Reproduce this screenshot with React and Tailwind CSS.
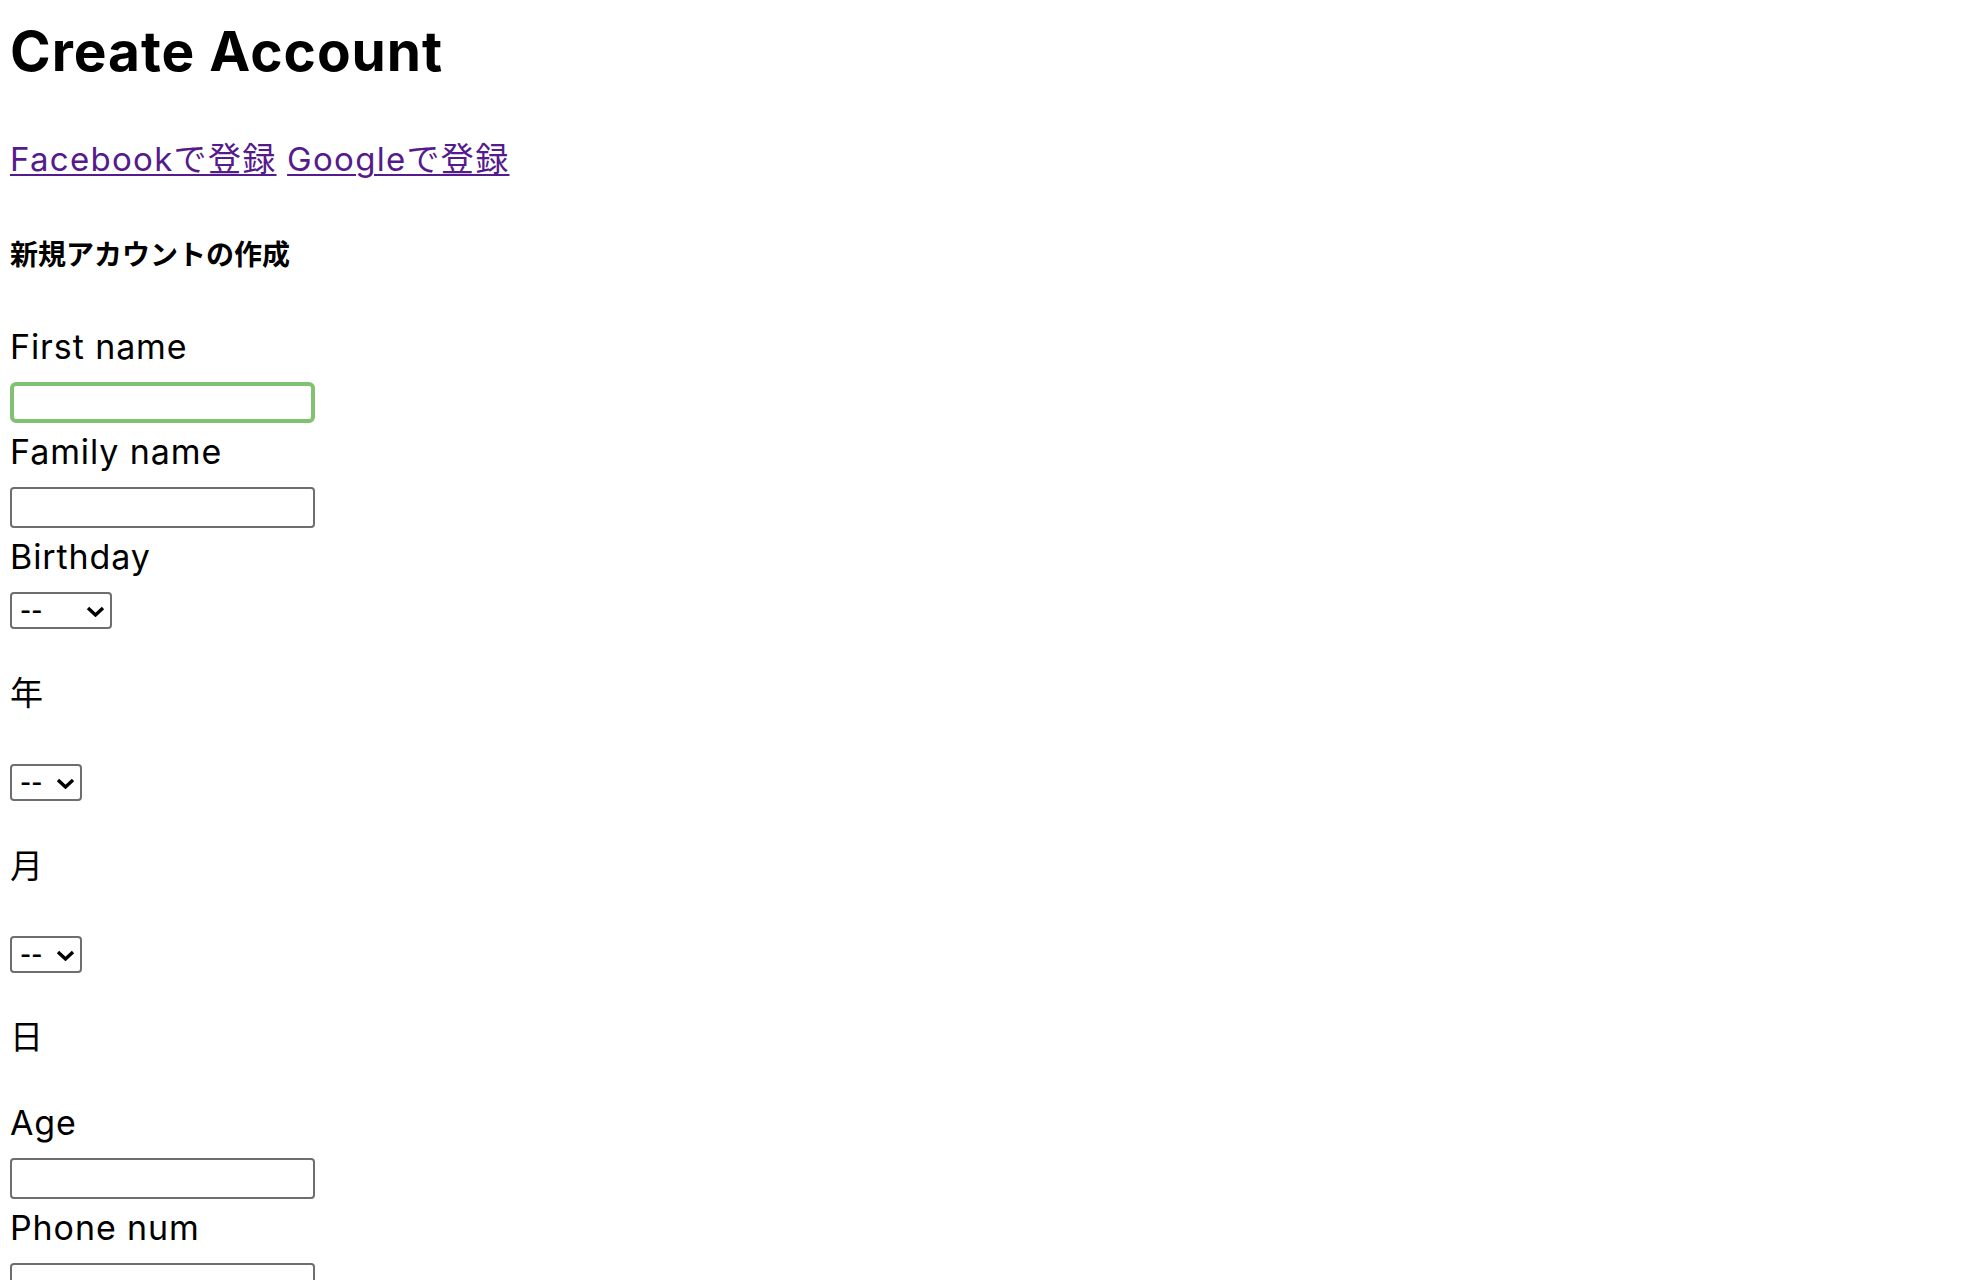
function Label({ children, className = "" }) {
  return (
    <div className={`h-[34px] text-[34px] leading-[34px] tracking-[0.9px] ${className}`}>
      {children}
    </div>
  );
}

function TextInput({ focused = false }) {
  return (
    <input
      type="text"
      className={
        focused
          ? "mt-[18px] block h-[41px] w-[305px] rounded-[6px] border-[4px] border-[#80c270] bg-white px-2 text-[26px] outline-none"
          : "mt-[18px] block h-[41px] w-[305px] rounded-[4px] border-2 border-[#6e6e6e] bg-white px-2 text-[26px] outline-none"
      }
    />
  );
}

function DateSelect({ className }) {
  return (
    <div className={`relative h-[37px] ${className}`}>
      <select className="h-full w-full appearance-none rounded-[4px] border-2 border-[#6e6e6e] bg-white pl-[8px] text-[24px] font-semibold leading-none text-black outline-none">
        <option>--</option>
      </select>
      <svg
        className="pointer-events-none absolute right-[7px] top-[14px]"
        width="19"
        height="11"
        viewBox="0 0 19 11"
      >
        <polyline points="2,2 9.5,9 17,2" fill="none" stroke="black" strokeWidth="3.4" />
      </svg>
    </div>
  );
}

export default function App() {
  return (
    <div className="flex min-h-screen flex-col items-start bg-white pl-[10px] font-['Inter','Noto_Sans_CJK_JP',sans-serif] text-black">
      {/* Header */}
      <h1 className="mt-[24px] h-[55px] text-[55px] font-bold leading-[55px] tracking-[1px]">Create Account</h1>

      <div className="mt-[64px] h-[33px] text-[33px] leading-[33px] tracking-[1.3px] text-[#551a8b]">
        <a href="#" className="underline decoration-2 underline-offset-[3px]">
          Facebookで登録
        </a>{" "}
        <a href="#" className="underline decoration-2 underline-offset-[3px]">
          Googleで登録
        </a>
      </div>

      <h5 className="mt-[65px] h-[28px] text-[28px] font-bold leading-[28px]">新規アカウントの作成</h5>

      {/* Form */}
      <Label className="mt-[61px]">First name</Label>
      <TextInput focused />

      <Label className="mt-[12px]">Family name</Label>
      <TextInput />

      <Label className="mt-[12px]">Birthday</Label>
      <DateSelect className="mt-[18px] w-[102px]" />

      <p className="mt-[48px] h-[33px] text-[33px] leading-[33px]">年</p>
      <DateSelect className="mt-[54px] w-[72px]" />

      <p className="mt-[49px] h-[33px] text-[33px] leading-[33px]">月</p>
      <DateSelect className="mt-[53px] w-[72px]" />

      <p className="mt-[48px] h-[33px] text-[33px] leading-[33px]">日</p>

      <Label className="mt-[52px]">Age</Label>
      <TextInput />

      <Label className="mt-[12px]">Phone num</Label>
      <TextInput />
    </div>
  );
}
